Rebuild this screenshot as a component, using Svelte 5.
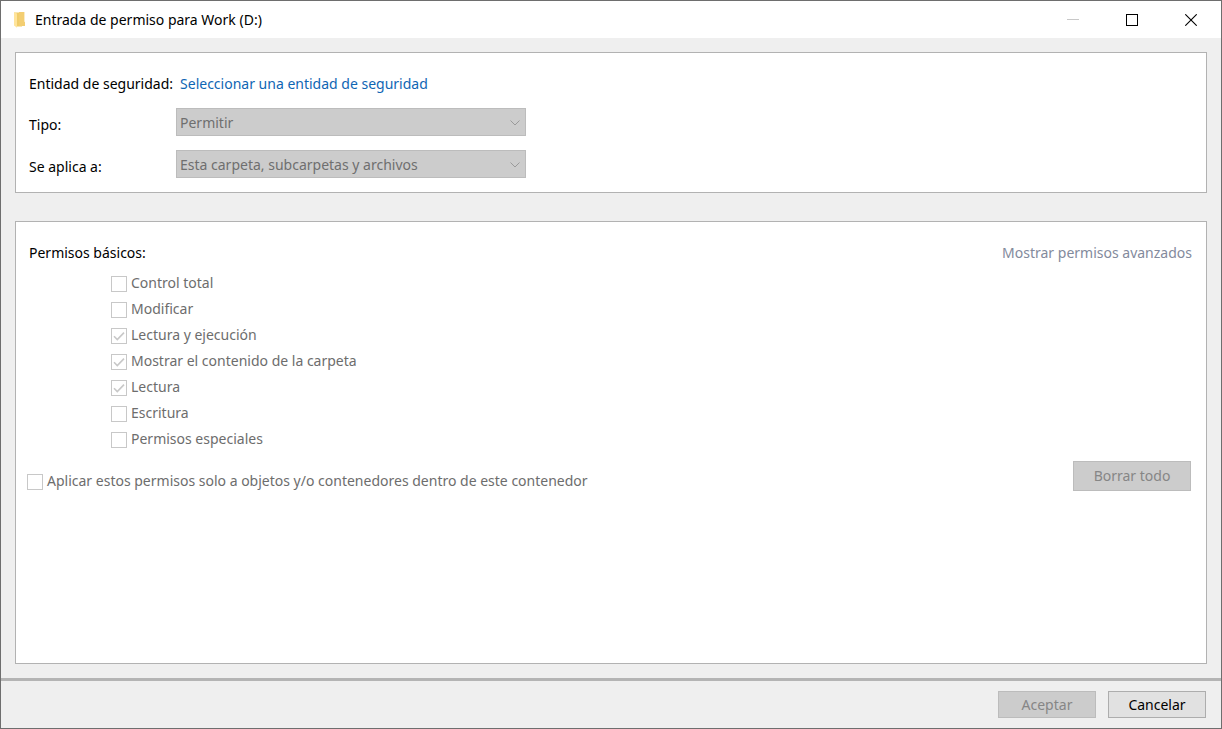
<script lang="ts">
	interface Permission {
		id: string;
		label: string;
		checked: boolean;
	}

	const permissions: Permission[] = [
		{ id: 'full', label: 'Control total', checked: false },
		{ id: 'modify', label: 'Modificar', checked: false },
		{ id: 'execute', label: 'Lectura y ejecución', checked: true },
		{ id: 'list', label: 'Mostrar el contenido de la carpeta', checked: true },
		{ id: 'read', label: 'Lectura', checked: true },
		{ id: 'write', label: 'Escritura', checked: false },
		{ id: 'special', label: 'Permisos especiales', checked: false }
	];

	const fields = [
		{ id: 'type', label: 'Tipo:', value: 'Permitir' },
		{ id: 'scope', label: 'Se aplica a:', value: 'Esta carpeta, subcarpetas y archivos' }
	];
</script>

{#snippet checkbox(id: string, label: string, checked: boolean)}
	<label class="check" for={id}>
		<span class="check-box">
			<input type="checkbox" {id} {checked} disabled />
			{#if checked}
				<svg viewBox="0 0 16 16" fill="none" stroke="#c8c8c8" stroke-width="1.6">
					<path d="M3 8.2 6.3 11.5 13 4.6"></path>
				</svg>
			{/if}
		</span>
		<span>{label}</span>
	</label>
{/snippet}

<div class="dialog">
	<header class="titlebar">
		<svg class="folder" viewBox="0 0 14 18">
			<path d="M1 1.5h7l1 1v13H3z" fill="#f0cd6b"></path>
			<path d="M6 1h5.4v9.5l.6.8V15H6z" fill="#f3ce72"></path>
			<path d="M1 1.2 4 2.4v14.4L1 14.6z" fill="#ffe49b"></path>
		</svg>
		<h1>Entrada de permiso para Work (D:)</h1>
		<div class="window-buttons">
			<button type="button" aria-label="Minimizar" disabled>
				<svg viewBox="0 0 12 12" stroke="#c8c8c8"><path d="M0 5.5h12"></path></svg>
			</button>
			<button type="button" aria-label="Maximizar">
				<svg viewBox="0 0 12 12" fill="none" stroke="#000">
					<rect x="0.5" y="0.5" width="11" height="11"></rect>
				</svg>
			</button>
			<button type="button" aria-label="Cerrar">
				<svg viewBox="0 0 12 12" fill="none" stroke="#000" stroke-width="1.1">
					<path d="M0.3 0.3l11.4 11.4M11.7 0.3L0.3 11.7"></path>
				</svg>
			</button>
		</div>
	</header>

	<main>
		<section class="panel principal">
			<div class="principal-row">
				<span>Entidad de seguridad:</span>
				<a href="#principal">Seleccionar una entidad de seguridad</a>
			</div>
			{#each fields as field}
				<div class="field">
					<label for={field.id}>{field.label}</label>
					<div class="select">
						<select id={field.id} disabled>
							<option>{field.value}</option>
						</select>
						<svg viewBox="0 0 10 6" fill="none" stroke="#9a9a9a">
							<path d="M0.5 0.5 5 5 9.5 0.5"></path>
						</svg>
					</div>
				</div>
			{/each}
		</section>

		<section class="panel permissions">
			<div class="permissions-head">
				<h2>Permisos básicos:</h2>
				<a class="muted" href="#advanced">Mostrar permisos avanzados</a>
			</div>
			<div class="list">
				{#each permissions as item}
					{@render checkbox(item.id, item.label, item.checked)}
				{/each}
			</div>
			<div class="permissions-foot">
				{@render checkbox(
					'container',
					'Aplicar estos permisos solo a objetos y/o contenedores dentro de este contenedor',
					false
				)}
				<button class="btn clear" type="button" disabled>Borrar todo</button>
			</div>
		</section>
	</main>

	<footer>
		<button class="btn" type="button" disabled>Aceptar</button>
		<button class="btn" type="button">Cancelar</button>
	</footer>
</div>

<style>
	:global(body) {
		margin: 0;
	}

	.dialog,
	.dialog * {
		box-sizing: border-box;
	}

	.dialog {
		background: #efefef;
		border: 1px solid #6e6e6e;
		color: #000;
		display: flex;
		flex-direction: column;
		font-family: 'Segoe UI', 'Noto Sans', 'Open Sans', sans-serif;
		font-size: 14px;
		line-height: 22px;
		min-height: 100vh;
	}

	h1,
	h2 {
		font-size: inherit;
		font-weight: 400;
		margin: 0;
	}

	button,
	select {
		font: inherit;
	}

	a {
		color: #0f66b4;
		text-decoration: none;
	}

	a.muted {
		color: #838a9c;
	}

	.titlebar {
		align-items: center;
		background: #fff;
		display: flex;
		height: 37px;
		padding: 0 1px 0 12px;
	}

	.folder {
		height: 18px;
		margin-right: 8px;
		width: 14px;
	}

	.window-buttons {
		align-self: stretch;
		display: flex;
		margin-left: auto;
	}

	.window-buttons button {
		align-items: center;
		background: none;
		border: 0;
		display: flex;
		justify-content: center;
		padding: 0;
		width: 59px;
	}

	.window-buttons svg {
		height: 12px;
		width: 12px;
	}

	main {
		display: flex;
		flex: 1;
		flex-direction: column;
		gap: 28px;
		padding: 14px;
	}

	.panel {
		background: #fff;
		border: 1px solid #b2b2b2;
	}

	.principal {
		display: flex;
		flex-direction: column;
		gap: 14px;
		padding: 21px 13px 14px;
	}

	.principal-row {
		display: flex;
		gap: 7px;
		line-height: 20px;
	}

	.field {
		display: flex;
	}

	.field label {
		padding-top: 6px;
		width: 147px;
	}

	.select {
		position: relative;
		width: 350px;
	}

	select {
		appearance: none;
		background: #ccc;
		border: 1px solid #bcbcbc;
		border-radius: 0;
		color: #6f6f6f;
		display: block;
		height: 28px;
		opacity: 1;
		padding: 2px 24px 0 3px;
		width: 100%;
	}

	.select svg {
		height: 6px;
		pointer-events: none;
		position: absolute;
		right: 6px;
		top: 12px;
		width: 10px;
	}

	.permissions {
		flex: 1;
		padding: 20px 14px 14px 11px;
	}

	.permissions-head {
		display: flex;
		justify-content: space-between;
		padding-left: 2px;
	}

	.list {
		align-items: flex-start;
		display: flex;
		flex-direction: column;
		margin-top: 6px;
		padding-left: 84px;
	}

	.check {
		color: #6d6d6d;
		display: flex;
		gap: 4px;
		padding: 2px 0;
	}

	.check-box {
		display: block;
		flex: none;
		height: 16px;
		margin-top: 4px;
		position: relative;
		width: 16px;
	}

	.check-box input {
		appearance: none;
		background: #fff;
		border: 1px solid #c8c8c8;
		display: block;
		height: 16px;
		margin: 0;
		width: 16px;
	}

	.check-box svg {
		inset: 0;
		pointer-events: none;
		position: absolute;
	}

	.permissions-foot {
		align-items: flex-start;
		display: flex;
		justify-content: space-between;
		margin-top: 9px;
		padding-right: 1px;
	}

	.permissions-foot .check {
		padding-top: 9px;
	}

	.btn {
		background: #e1e1e1;
		border: 1px solid #adadad;
		color: #000;
		height: 27px;
		padding: 0;
		width: 98px;
	}

	.btn:disabled {
		background: #ccc;
		border-color: #bcbcbc;
		color: #868686;
	}

	.btn.clear {
		height: 30px;
		width: 118px;
	}

	footer {
		border-top: 3px solid #b4b4b4;
		display: flex;
		gap: 12px;
		justify-content: flex-end;
		padding: 10px 15px;
	}
</style>
